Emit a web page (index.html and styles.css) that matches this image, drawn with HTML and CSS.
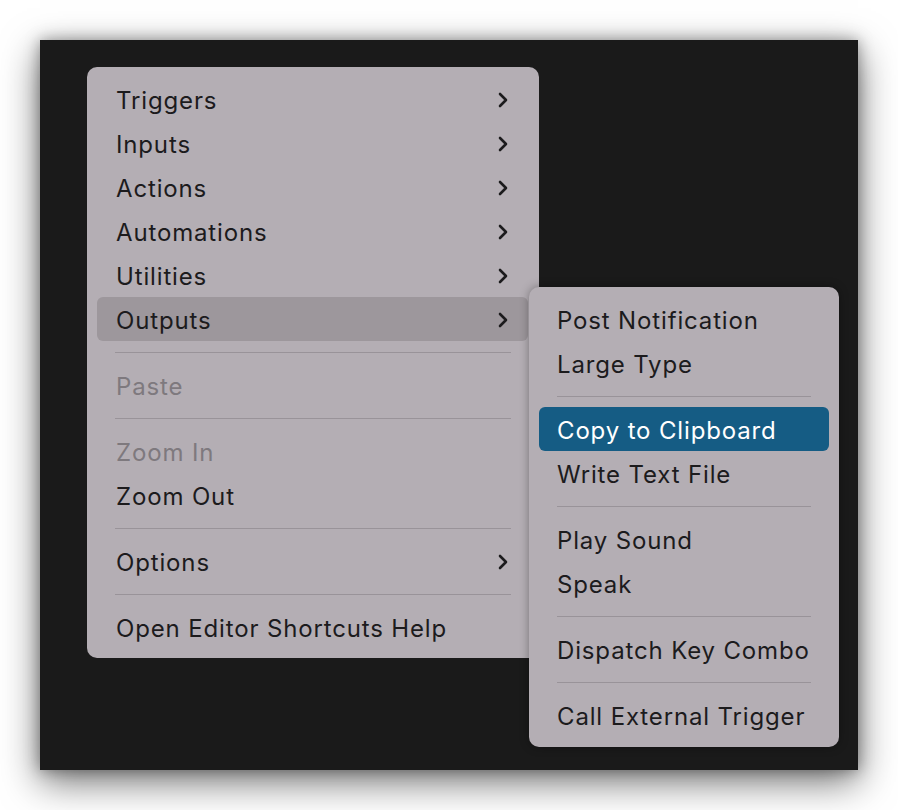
FILE: index.html
```
<!DOCTYPE html>
<html>
<head>
<meta charset="utf-8">
<link rel="stylesheet" href="styles.css">
</head>
<body>
<div class="window">
  <div class="menu main">
    <div class="item sub">Triggers<svg class="chev" viewBox="0 0 10 16"><path d="M2 2 L8 8 L2 14"/></svg></div>
    <div class="item sub">Inputs<svg class="chev" viewBox="0 0 10 16"><path d="M2 2 L8 8 L2 14"/></svg></div>
    <div class="item sub">Actions<svg class="chev" viewBox="0 0 10 16"><path d="M2 2 L8 8 L2 14"/></svg></div>
    <div class="item sub">Automations<svg class="chev" viewBox="0 0 10 16"><path d="M2 2 L8 8 L2 14"/></svg></div>
    <div class="item sub">Utilities<svg class="chev" viewBox="0 0 10 16"><path d="M2 2 L8 8 L2 14"/></svg></div>
    <div class="item sub open">Outputs<svg class="chev" viewBox="0 0 10 16"><path d="M2 2 L8 8 L2 14"/></svg></div>
    <div class="sep"></div>
    <div class="item disabled">Paste</div>
    <div class="sep"></div>
    <div class="item disabled">Zoom In</div>
    <div class="item">Zoom Out</div>
    <div class="sep"></div>
    <div class="item sub">Options<svg class="chev" viewBox="0 0 10 16"><path d="M2 2 L8 8 L2 14"/></svg></div>
    <div class="sep"></div>
    <div class="item">Open Editor Shortcuts Help</div>
  </div>
  <div class="menu submenu">
    <div class="item">Post Notification</div>
    <div class="item">Large Type</div>
    <div class="sep"></div>
    <div class="item selected">Copy to Clipboard</div>
    <div class="item">Write Text File</div>
    <div class="sep"></div>
    <div class="item">Play Sound</div>
    <div class="item">Speak</div>
    <div class="sep"></div>
    <div class="item">Dispatch Key Combo</div>
    <div class="sep"></div>
    <div class="item">Call External Trigger</div>
  </div>
</div>
</body>
</html>
```

FILE: styles.css
```
html, body {
  margin: 0;
  padding: 0;
  background: #ffffff;
}
body {
  width: 898px;
  height: 810px;
  overflow: hidden;
  font-family: Inter, "Liberation Sans", sans-serif;
}
.window {
  position: relative;
  margin: 40px 0 0 40px;
  width: 818px;
  height: 730px;
  background: #1a1a1a;
  box-shadow: 0 12px 36px rgba(0, 0, 0, 0.55), 0 0 14px rgba(0, 0, 0, 0.35);
  padding: 27px 0 0 47px;
  box-sizing: border-box;
}
.menu {
  background: #b4aeb4;
  border-radius: 10px;
  display: flex;
  flex-direction: column;
  box-sizing: border-box;
}
.main {
  width: 452px;
  padding: 10px 11px 9px 10px;
}
.submenu {
  position: absolute;
  left: 489px;
  top: 247px;
  width: 310px;
  padding: 10px 10px 10px 10px;
  box-shadow: 0 0 10px rgba(0, 0, 0, 0.35);
}
.item {
  height: 44px;
  display: flex;
  align-items: center;
  justify-content: space-between;
  font-size: 24px;
  color: #1c1b1d;
  letter-spacing: 0.85px;
  border-radius: 6px;
  padding-top: 2px;
  box-sizing: border-box;
  white-space: nowrap;
}
.main .item {
  padding-left: 19px;
  padding-right: 20px;
}
.submenu .item {
  padding-left: 18px;
  padding-right: 10px;
}
.item.open {
  background: #9d979c;
}
.item.selected {
  background: #155c84;
  color: #ffffff;
}
.item.disabled {
  color: #7e797e;
}
.chev {
  width: 10px;
  height: 16px;
  fill: none;
  stroke: #1c1b1d;
  stroke-width: 2.6;
  stroke-linecap: round;
  stroke-linejoin: round;
}
.sep {
  height: 22px;
  display: flex;
  align-items: center;
}
.sep::before {
  content: "";
  display: block;
  height: 1px;
  width: 100%;
  background: #999399;
}
.main .sep {
  padding: 0 17px 0 18px;
}
.submenu .sep {
  padding: 0 18px;
}
```
